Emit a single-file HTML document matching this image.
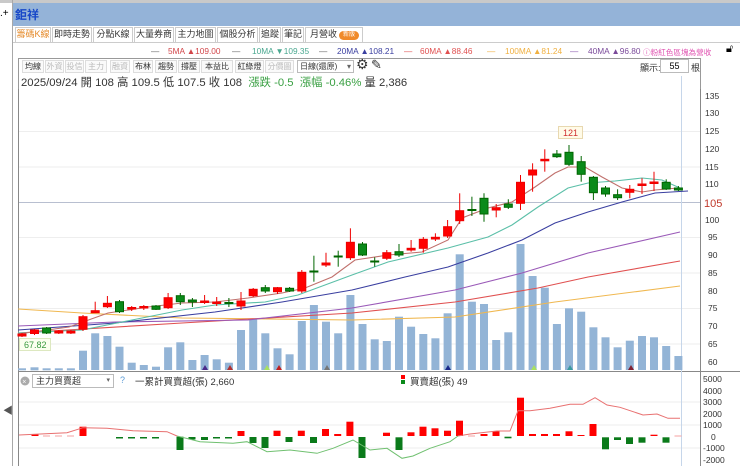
<!DOCTYPE html>
<html><head><meta charset="utf-8"><style>
*{margin:0;padding:0;box-sizing:border-box}
body{width:740px;height:466px;overflow:hidden;background:#fff;font-family:"Liberation Sans","Noto Sans CJK TC",sans-serif;position:relative}
.a{position:absolute;white-space:nowrap}
.tab{position:absolute;top:27px;height:15px;border:1px solid #ccc;border-bottom:none;font-size:9px;line-height:13px;text-align:center;color:#333;background:#fff;white-space:nowrap;overflow:hidden}
.btn{position:absolute;top:60px;height:13px;border:1px solid #ddd;font-size:8px;line-height:11px;text-align:center;color:#333;background:#fafafa;white-space:nowrap;overflow:hidden}
.g{color:#bbb}
.ma{position:absolute;top:46px;font-size:8.3px;white-space:nowrap}
</style></head><body>
<div class="a" style="left:0;top:0;width:740px;height:3px;background:#c9c9c9"></div>
<div class="a" style="left:12px;top:3px;width:728px;height:23px;background:#94b3d8"></div>
<div class="a" style="left:0;top:3px;width:12px;height:23px;background:#fff;font-size:10px;line-height:22px;color:#000">.+</div>
<div class="a" style="left:15px;top:6px;font-size:12px;font-weight:bold;color:#1848c8">鉅祥</div>
<div class="a" style="left:12px;top:0;width:1px;height:466px;background:#a8a8a8"></div>
<div class="a" style="left:3px;top:402px;font-size:10px;color:#555">◀</div>
<div class="a" style="left:13px;top:42px;width:727px;height:1px;background:#ccc"></div>
<div class="tab" style="left:15px;width:36px;color:#e58a2a">籌碼K線</div>
<div class="tab" style="left:52px;width:40px">即時走勢</div>
<div class="tab" style="left:93px;width:40px">分點K線</div>
<div class="tab" style="left:134px;width:40px">大量券商</div>
<div class="tab" style="left:175px;width:41px">主力地圖</div>
<div class="tab" style="left:217px;width:41px">個股分析</div>
<div class="tab" style="left:259px;width:22px">追蹤</div>
<div class="tab" style="left:282px;width:22px">筆記</div>
<div class="tab" style="left:305px;width:58px;text-align:left;padding-left:4px">月營收<span style="display:inline-block;margin-left:2px;width:20px;height:9px;border-radius:5px;background:#f08a2a;color:#fff;font-size:6px;line-height:9px;text-align:center;vertical-align:1px">新版</span></div>
<div class="ma" style="left:151px;color:#666">—</div><div class="ma" style="left:168px;color:#d2464a">5MA ▲109.00</div>
<div class="ma" style="left:232px;color:#666">—</div><div class="ma" style="left:252px;color:#4aa890">10MA ▼109.35</div>
<div class="ma" style="left:319px;color:#666">—</div><div class="ma" style="left:337px;color:#3a3fa0">20MA ▲108.21</div>
<div class="ma" style="left:404px;color:#e05050">—</div><div class="ma" style="left:420px;color:#e05050">60MA ▲88.46</div>
<div class="ma" style="left:487px;color:#f0b040">—</div><div class="ma" style="left:505px;color:#f0b040">100MA ▲81.24</div>
<div class="ma" style="left:570px;color:#8a5ab0">—</div><div class="ma" style="left:588px;color:#7a4a9a">40MA ▲96.80</div>
<div class="ma" style="left:643px;color:#e050b0;font-size:7.6px;top:47px">ⓘ粉紅色區塊為營收</div>
<div class="a" style="left:726px;top:43px;font-size:11px">🔓︎</div>
<div class="a" style="left:18px;top:58px;width:683px;height:31px;border:1px solid #999;border-bottom:none"></div>
<div class="btn" style="left:22px;width:22px">均線</div>
<div class="btn g" style="left:45px;width:19px">外資</div>
<div class="btn g" style="left:65px;width:19px">投信</div>
<div class="btn g" style="left:85px;width:22px">主力</div>
<div class="btn g" style="left:110px;width:20px">融資</div>
<div class="btn" style="left:133px;width:20px">布林</div>
<div class="btn" style="left:155px;width:22px">趨勢</div>
<div class="btn" style="left:178px;width:22px">撐壓</div>
<div class="btn" style="left:201px;width:32px">本益比</div>
<div class="btn" style="left:235px;width:29px">紅綠燈</div>
<div class="btn g" style="left:265px;width:29px">分價圖</div>
<div class="btn" style="left:297px;width:57px;text-align:left;padding-left:2px;background:#fff;border-color:#bbb">日線(還原)<span style="float:right;margin-right:2px;color:#666">▾</span></div>
<div class="a" style="left:356px;top:56px;font-size:14px;color:#333">⚙</div>
<div class="a" style="left:371px;top:57px;font-size:13px;color:#333">✎</div>
<div class="a" style="left:640px;top:61px;font-size:9px;color:#333">顯示:</div>
<div class="a" style="left:660px;top:59px;width:29px;height:14px;border:1px solid #bbb;font-size:9px;line-height:12px;text-align:center">55</div>
<div class="a" style="left:691px;top:61px;font-size:9px;color:#333">根</div>
<div class="a" style="left:21px;top:74px;font-size:11.3px;color:#333">2025/09/24 開 108 高 109.5 低 107.5 收 108 <span style="color:#3aa043">&nbsp;漲跌 -0.5 &nbsp;漲幅 -0.46%</span> 量 2,386</div>
<svg class="a" style="left:0;top:0" width="740" height="466" viewBox="0 0 740 466">
<g stroke="#eee" stroke-width="1">
<line x1="18" y1="131.5" x2="700" y2="131.5"/><line x1="18" y1="167" x2="700" y2="167"/><line x1="18" y1="237.5" x2="700" y2="237.5"/><line x1="18" y1="273" x2="700" y2="273"/><line x1="18" y1="308.5" x2="700" y2="308.5"/><line x1="18" y1="344" x2="700" y2="344"/>
<line x1="18" y1="402" x2="700" y2="402"/><line x1="18" y1="425" x2="700" y2="425"/><line x1="18" y1="448" x2="700" y2="448"/>
</g>
<line x1="18" y1="202.5" x2="700" y2="202.5" stroke="#b8bfd0"/>
<line x1="18.5" y1="89" x2="18.5" y2="466" stroke="#888"/>
<line x1="700.5" y1="89" x2="700.5" y2="466" stroke="#888"/>
<line x1="18" y1="371.5" x2="740" y2="371.5" stroke="#888"/>
<line x1="681.5" y1="76" x2="681.5" y2="466" stroke="#c6d6ea"/>
<g fill="#333" font-size="8.5" font-family="Liberation Sans">
<text x="705" y="99">135</text><text x="705" y="116">130</text><text x="705" y="134">125</text><text x="705" y="152">120</text><text x="705" y="170">115</text><text x="705" y="187">110</text><text x="705" y="223">100</text><text x="708" y="240">95</text><text x="708" y="258">90</text><text x="708" y="276">85</text><text x="708" y="294">80</text><text x="708" y="311">75</text><text x="708" y="329">70</text><text x="708" y="347">65</text><text x="708" y="365">60</text>
<text x="703" y="382">5000</text><text x="703" y="394">4000</text><text x="703" y="405">3000</text><text x="703" y="417">2000</text><text x="703" y="428">1000</text><text x="711" y="440">0</text><text x="703" y="451">-1000</text><text x="703" y="463">-2000</text>
</g>
<text x="704" y="207" fill="#c0392b" font-size="11" font-family="Liberation Sans">105</text>
<g fill="#93b4d6">
<rect x="18" y="368.3" width="8" height="2"/><rect x="30.5" y="367.3" width="8" height="3"/><rect x="42.6" y="368.3" width="8" height="2"/><rect x="54.8" y="368.3" width="8" height="2"/><rect x="66.9" y="368.3" width="8" height="2"/><rect x="79" y="350.7" width="8" height="19.3"/><rect x="91.2" y="333.3" width="8" height="36.7"/><rect x="103.4" y="336" width="8" height="34"/><rect x="115.5" y="346.7" width="8" height="23.3"/><rect x="127.7" y="362.7" width="8" height="7.3"/><rect x="139.8" y="365" width="8" height="5"/><rect x="152" y="366.7" width="8" height="3.3"/><rect x="164.1" y="347.3" width="8" height="22.7"/><rect x="176.3" y="342.3" width="8" height="27.7"/><rect x="188.4" y="360" width="8" height="10"/><rect x="200.6" y="355" width="8" height="15"/><rect x="212.7" y="359.3" width="8" height="10.7"/><rect x="224.9" y="362.7" width="8" height="7.3"/><rect x="237" y="330" width="8" height="40"/><rect x="249.2" y="319.3" width="8" height="50.7"/><rect x="261.3" y="333.3" width="8" height="36.7"/><rect x="273.5" y="348.3" width="8" height="21.7"/><rect x="285.6" y="354.3" width="8" height="15.7"/><rect x="297.8" y="321" width="8" height="49"/><rect x="309.9" y="305" width="8" height="65"/><rect x="322" y="321.7" width="8" height="48.3"/><rect x="334.2" y="333.3" width="8" height="36.7"/><rect x="346.4" y="295" width="8" height="75"/><rect x="358.5" y="324" width="8" height="46"/><rect x="370.7" y="339.3" width="8" height="30.7"/><rect x="382.8" y="341" width="8" height="29"/><rect x="395" y="316.7" width="8" height="53.3"/><rect x="407.1" y="326.7" width="8" height="43.3"/><rect x="419.3" y="334" width="8" height="36"/><rect x="431.4" y="338.3" width="8" height="31.7"/><rect x="443.6" y="313.3" width="8" height="56.7"/><rect x="455.7" y="254.3" width="8" height="115.7"/><rect x="467.9" y="301.7" width="8" height="68.3"/><rect x="480" y="304" width="8" height="66"/><rect x="492.2" y="340" width="8" height="30"/><rect x="504.3" y="332.3" width="8" height="37.7"/><rect x="516.5" y="244" width="8" height="126"/><rect x="528.6" y="276" width="8" height="94"/><rect x="540.8" y="287.7" width="8" height="82.3"/><rect x="552.9" y="324" width="8" height="46"/><rect x="565" y="308.3" width="8" height="61.7"/><rect x="577.2" y="311.7" width="8" height="58.3"/><rect x="589.4" y="327.3" width="8" height="42.7"/><rect x="601.5" y="337.3" width="8" height="32.7"/><rect x="613.6" y="347.3" width="8" height="22.7"/><rect x="625.8" y="340.7" width="8" height="29.3"/><rect x="638" y="336" width="8" height="34"/><rect x="650" y="337.3" width="8" height="32.7"/><rect x="662.2" y="346" width="8" height="24"/><rect x="674.4" y="356" width="8" height="14"/>
</g>
<g>
<polygon points="205,365 208,370 202,370" fill="#4a2a8a"/><polygon points="230,365 233,370 227,370" fill="#b03030"/><polygon points="267,365 270,370 264,370" fill="#a8e060"/><polygon points="279,365 282,370 276,370" fill="#c02020"/><polygon points="327,365 330,370 324,370" fill="#777"/><polygon points="448,365 451,370 445,370" fill="#1a2a8a"/><polygon points="534,365 537,370 531,370" fill="#a8e060"/><polygon points="570,365 573,370 567,370" fill="#3a9aa0"/><polygon points="631,365 634,370 628,370" fill="#802030"/>
</g>
<g fill="none" stroke-width="1.1">
<polyline stroke="#f0b850" points="18,309 82,313 182,318 352,320 455,317 555,302 680,286"/>
<polyline stroke="#e05050" points="18,333 182,323 352,313 455,302 538,288 588,277 680,261"/>
<polyline stroke="#9a5ab8" points="18,326 115,322 248,320 352,308 455,290 522,273 588,253 680,232"/>
<polyline stroke="#3a3fa0" points="18,330 115,323 215,312 282,302 352,290 405,277 448,267 488,253 522,240 555,223 588,212 622,202 655,193 688,191"/>
<polyline stroke="#5bbfa8" points="18,333 82,330 132,320 182,310 215,305 265,302 298,295 352,275 388,262 448,248 488,237 512,225 538,207 568,188 588,183 615,181 642,178 662,180 680,188"/>
<polyline stroke="#c0706c" points="18,334 69,327 108,313 148,307 182,303 215,302 248,298 282,293 305,288 332,277 355,260 388,255 422,252 448,240 462,218 488,208 512,202 535,187 555,173 568,167 585,167 602,177 622,188 642,192 655,190 678,188"/>
</g>
<g stroke-width="1">
<g stroke="#e00" fill="#f00">
<line x1="22" y1="333" x2="22" y2="337"/><rect x="18" y="334" width="8" height="2"/>
<line x1="34.5" y1="329" x2="34.5" y2="335"/><rect x="30.5" y="330" width="8" height="3.5"/>
<line x1="58.8" y1="330" x2="58.8" y2="334"/><rect x="54.8" y="331" width="8" height="2"/>
<line x1="70.9" y1="330" x2="70.9" y2="334"/><rect x="66.9" y="331" width="8" height="2"/>
<line x1="83" y1="315" x2="83" y2="331"/><rect x="79" y="316.7" width="8" height="12.6"/>
<line x1="95.2" y1="301.7" x2="95.2" y2="313"/><rect x="91.2" y="310.7" width="8" height="2"/>
<line x1="107.4" y1="296" x2="107.4" y2="308"/><rect x="103.4" y="303.3" width="8" height="3.4"/>
<line x1="131.7" y1="306" x2="131.7" y2="311"/><rect x="127.7" y="307.5" width="8" height="1.5"/>
<line x1="143.8" y1="305" x2="143.8" y2="310"/><rect x="139.8" y="306.5" width="8" height="1.5"/>
<line x1="168.1" y1="293" x2="168.1" y2="309"/><rect x="164.1" y="297.7" width="8" height="10"/>
<line x1="204.6" y1="295" x2="204.6" y2="304"/><rect x="200.6" y="301" width="8" height="1.5"/>
<line x1="216.7" y1="297" x2="216.7" y2="306"/><rect x="212.7" y="302" width="8" height="1.5"/>
<line x1="241" y1="292" x2="241" y2="310"/><rect x="237" y="301" width="8" height="5"/>
<line x1="253.2" y1="288" x2="253.2" y2="297"/><rect x="249.2" y="289.3" width="8" height="6.4"/>
<line x1="277.5" y1="287" x2="277.5" y2="294"/><rect x="273.5" y="287.7" width="8" height="4"/>
<line x1="301.8" y1="270" x2="301.8" y2="293"/><rect x="297.8" y="272.3" width="8" height="18.7"/>
<line x1="326" y1="252.7" x2="326" y2="267"/><rect x="322" y="263" width="8" height="2"/>
<line x1="350.4" y1="228.3" x2="350.4" y2="260"/><rect x="346.4" y="242.3" width="8" height="15.4"/>
<line x1="386.8" y1="250" x2="386.8" y2="260"/><rect x="382.8" y="252.7" width="8" height="5.6"/>
<line x1="411.1" y1="240" x2="411.1" y2="251.7"/><rect x="407.1" y="248.3" width="8" height="1.7"/>
<line x1="423.3" y1="237" x2="423.3" y2="252.7"/><rect x="419.3" y="239.3" width="8" height="9"/>
<line x1="435.4" y1="233.3" x2="435.4" y2="241"/><rect x="431.4" y="237.3" width="8" height="1.7"/>
<line x1="447.6" y1="220" x2="447.6" y2="238"/><rect x="443.6" y="226.7" width="8" height="9.3"/>
<line x1="459.7" y1="193.3" x2="459.7" y2="224"/><rect x="455.7" y="210.7" width="8" height="10"/>
<line x1="496.2" y1="204" x2="496.2" y2="217.3"/><rect x="492.2" y="207.7" width="8" height="2.3"/>
<line x1="520.5" y1="175" x2="520.5" y2="210"/><rect x="516.5" y="182.3" width="8" height="21"/>
<line x1="532.6" y1="163.3" x2="532.6" y2="191.7"/><rect x="528.6" y="170" width="8" height="5"/>
<line x1="544.8" y1="149.3" x2="544.8" y2="171.7"/><rect x="540.8" y="159.3" width="8" height="1.5"/>
<line x1="629.8" y1="185" x2="629.8" y2="198.3"/><rect x="625.8" y="189.3" width="8" height="3"/>
<line x1="642" y1="178.3" x2="642" y2="194"/><rect x="638" y="184" width="8" height="1.5"/>
<line x1="654" y1="171.7" x2="654" y2="191"/><rect x="650" y="182" width="8" height="1.5"/>
</g>
<g stroke="#060" fill="#0a8a1a">
<line x1="46.6" y1="327" x2="46.6" y2="334"/><rect x="42.6" y="328" width="8" height="5"/>
<line x1="119.5" y1="300" x2="119.5" y2="313"/><rect x="115.5" y="301.7" width="8" height="10"/>
<line x1="156" y1="305" x2="156" y2="310"/><rect x="152" y="306" width="8" height="3.3"/>
<line x1="180.3" y1="293" x2="180.3" y2="305"/><rect x="176.3" y="295.7" width="8" height="6"/>
<line x1="192.4" y1="298" x2="192.4" y2="307"/><rect x="188.4" y="300" width="8" height="2"/>
<line x1="228.9" y1="298" x2="228.9" y2="307"/><rect x="224.9" y="302.5" width="8" height="1"/>
<line x1="265.3" y1="285" x2="265.3" y2="293"/><rect x="261.3" y="287.7" width="8" height="3.3"/>
<line x1="289.6" y1="287" x2="289.6" y2="292"/><rect x="285.6" y="288.3" width="8" height="2.7"/>
<line x1="313.9" y1="255.7" x2="313.9" y2="281.7"/><rect x="309.9" y="271" width="8" height="1"/>
<line x1="338.2" y1="250.7" x2="338.2" y2="266.7"/><rect x="334.2" y="256" width="8" height="1"/>
<line x1="362.5" y1="242" x2="362.5" y2="256"/><rect x="358.5" y="244" width="8" height="11"/>
<line x1="374.7" y1="257.3" x2="374.7" y2="266.7"/><rect x="370.7" y="261" width="8" height="1"/>
<line x1="399" y1="244" x2="399" y2="257"/><rect x="395" y="251.7" width="8" height="3.3"/>
<line x1="471.9" y1="196.7" x2="471.9" y2="216"/><rect x="467.9" y="209.5" width="8" height="1"/>
<line x1="484" y1="193.3" x2="484" y2="221.7"/><rect x="480" y="198.3" width="8" height="15.7"/>
<line x1="508.3" y1="199.3" x2="508.3" y2="209"/><rect x="504.3" y="204" width="8" height="3.3"/>
<line x1="556.9" y1="150" x2="556.9" y2="158"/><rect x="552.9" y="154" width="8" height="2.7"/>
<line x1="569" y1="145" x2="569" y2="166"/><rect x="565" y="152.3" width="8" height="12"/>
<line x1="581.2" y1="156" x2="581.2" y2="181.7"/><rect x="577.2" y="161.7" width="8" height="12.6"/>
<line x1="593.4" y1="176" x2="593.4" y2="200"/><rect x="589.4" y="177.3" width="8" height="15.4"/>
<line x1="605.5" y1="186" x2="605.5" y2="196.7"/><rect x="601.5" y="188" width="8" height="6"/>
<line x1="617.6" y1="189.3" x2="617.6" y2="200"/><rect x="613.6" y="194.7" width="8" height="3"/>
<line x1="666.2" y1="179.3" x2="666.2" y2="190"/><rect x="662.2" y="182.3" width="8" height="6.7"/>
<line x1="678.4" y1="186" x2="678.4" y2="191"/><rect x="674.4" y="188" width="8" height="2"/>
</g>
</g>
<rect x="558.5" y="126.5" width="24" height="12" fill="#fffbe8" stroke="#e8d8b0"/>
<text x="563" y="136" fill="#d03030" font-size="9" font-family="Liberation Sans">121</text>
<rect x="19.5" y="338.5" width="31" height="12" fill="#fbfff0" stroke="#dde8c0"/>
<text x="24" y="348" fill="#3a9a40" font-size="9" font-family="Liberation Sans">67.82</text>
<g fill="#f00">
<rect x="31.5" y="434" width="7" height="2"/><rect x="79.5" y="426.7" width="7" height="9.3"/><rect x="237.5" y="431" width="7" height="5"/><rect x="273.5" y="430.7" width="7" height="5.3"/><rect x="297.8" y="430.7" width="7" height="5.3"/><rect x="322" y="429" width="7" height="7"/><rect x="334.2" y="434" width="7" height="2"/><rect x="346.4" y="421.7" width="7" height="14.3"/><rect x="383" y="432.7" width="7" height="3.3"/><rect x="407.5" y="432.3" width="7" height="3.7"/><rect x="419.5" y="426.7" width="7" height="9.3"/><rect x="431.5" y="428.3" width="7" height="7.7"/><rect x="444" y="430.7" width="7" height="5.3"/><rect x="456" y="420.7" width="7" height="15.3"/><rect x="480.5" y="434" width="7" height="2"/><rect x="492.5" y="431" width="7" height="5"/><rect x="517" y="397.7" width="7" height="38.3"/><rect x="529" y="434" width="7" height="2"/><rect x="541" y="434" width="7" height="2"/><rect x="553" y="434" width="7" height="2"/><rect x="565.5" y="431.3" width="7" height="4.7"/><rect x="577.5" y="435" width="7" height="1"/><rect x="589.5" y="424" width="7" height="12"/><rect x="650.5" y="434.7" width="7" height="1.3"/>
</g>
<g fill="#f6a0a0"><rect x="43" y="435.5" width="7" height="1"/><rect x="55" y="435.5" width="7" height="1"/><rect x="67" y="435.5" width="7" height="1"/><rect x="468" y="435.5" width="7" height="1"/><rect x="674.5" y="435.5" width="7" height="1"/></g>
<g fill="#0a7a1a">
<rect x="116" y="437" width="7" height="1.5"/><rect x="128" y="437" width="7" height="1.5"/><rect x="140" y="437" width="7" height="1.5"/><rect x="152" y="437" width="7" height="1.5"/><rect x="176.5" y="436.7" width="7" height="13.3"/><rect x="188.5" y="437" width="7" height="2.5"/><rect x="201" y="437" width="7" height="3"/><rect x="213" y="437" width="7" height="1.5"/><rect x="225" y="437" width="7" height="1.5"/><rect x="249.5" y="437" width="7" height="6"/><rect x="261.5" y="437" width="7" height="11"/><rect x="285.5" y="437" width="7" height="5"/><rect x="310" y="437" width="7" height="6"/><rect x="358.5" y="437" width="7" height="21"/><rect x="395.5" y="437.3" width="7" height="12.7"/><rect x="504.5" y="436.7" width="7" height="1.6"/><rect x="602" y="437.3" width="7" height="12"/><rect x="614" y="437.3" width="7" height="2.7"/><rect x="626" y="437.3" width="7" height="6.7"/><rect x="638.5" y="437.3" width="7" height="5.4"/><rect x="662.5" y="437.3" width="7" height="5.4"/>
</g>
<polyline fill="none" stroke="#e87070" stroke-width="1" points="19,435 67,432.7 83,427.7 107,428.3 133,430.7 167,431.7 177,436"/>
<polyline fill="none" stroke="#70c070" stroke-width="1" points="177,436 200,441.7 233,443.3 247,441.7 267,451.7 290,450 317,453.3 333,448.3 353,440 370,450 387,448.3 402,458.3 413,456 430,448.3 450,441.7 458,436"/>
<polyline fill="none" stroke="#e87070" stroke-width="1" points="458,436 470,434 497,431 510,431 518,410.7 530,410.7 550,408.3 570,404.3 583,404.3 595,397.7 607,405 620,407.3 643,415 657,414 668,418.3 680,418.3"/>
<circle cx="25" cy="381" r="4.5" fill="#aaa"/><text x="22.3" y="384" fill="#fff" font-size="7" font-family="Liberation Sans">×</text>
</svg>
<div class="a" style="left:32px;top:374px;width:82px;height:14px;border:1px solid #bbb;font-size:9px;line-height:12px;padding-left:3px;color:#333;background:#fff">主力買賣超<span style="float:right;margin-right:3px;color:#666;font-size:7px">▾</span></div>
<div class="a" style="left:120px;top:375px;font-size:9px;color:#5b9bd5">?</div>
<div class="a" style="left:135px;top:374px;font-size:9.5px;color:#333">一累計買賣超(張) 2,660</div>
<div class="a" style="left:401px;top:375px;width:4px;height:4px;background:#f00"></div>
<div class="a" style="left:401px;top:380px;width:4px;height:4px;background:#0a8a1a"></div>
<div class="a" style="left:410px;top:374px;font-size:9.5px;color:#333">買賣超(張) 49</div>
</body></html>
